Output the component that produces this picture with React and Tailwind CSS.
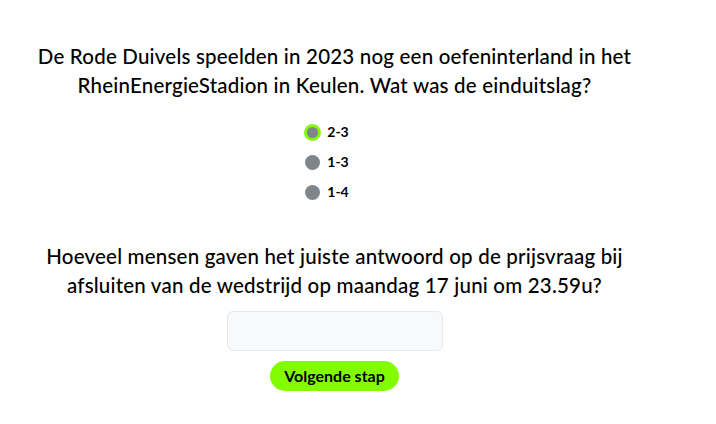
import React, { useState } from 'react';

const options = ['2-3', '1-3', '1-4'];

export default function App() {
  const [choice, setChoice] = useState('2-3');
  const [answer, setAnswer] = useState('');

  return (
    <div className="w-[716px] h-[424px] bg-white" style={{ fontFamily: 'Lato, "Open Sans", sans-serif' }}>
      <div className="w-[669px] flex flex-col items-center pt-[42px]">
        <h2 className="text-[20.5px] leading-[29px] tracking-[0.2px] font-medium text-black text-center">
          De Rode Duivels speelden in 2023 nog een oefeninterland in het
          <br />
          RheinEnergieStadion in Keulen. Wat was de einduitslag?
        </h2>

        <div className="mt-[24px] flex flex-col gap-[14px] pr-[16px]">
          {options.map((o) => (
            <label key={o} className="flex items-center gap-[7px] cursor-pointer" onClick={() => setChoice(o)}>
              <span className="w-4 h-4 flex items-center justify-center">
                <span
                  className={
                    choice === o
                      ? 'w-[17px] h-[17px] shrink-0 rounded-full bg-[#7e868c] border-[3px] border-[#84f80a]'
                      : 'w-[15px] h-[15px] rounded-full bg-[#7e868c]'
                  }
                />
              </span>
              <span className="text-[14px] leading-4 font-bold text-black">{o}</span>
            </label>
          ))}
        </div>

        <h2 className="mt-[42px] text-[20.5px] leading-[29px] tracking-[0.2px] font-medium text-black text-center">
          Hoeveel mensen gaven het juiste antwoord op de prijsvraag bij
          <br />
          afsluiten van de wedstrijd op maandag 17 juni om 23.59u?
        </h2>

        <input
          value={answer}
          onChange={(e) => setAnswer(e.target.value)}
          className="mt-[11px] w-[216px] h-[40px] rounded-md border border-[#e6e8eb] bg-[#f8f9fa] px-3 outline-none"
        />

        <button className="mt-[10px] h-[30px] px-[14px] rounded-full bg-[#84fc00] text-[16px] font-bold text-black">
          Volgende stap
        </button>
      </div>
    </div>
  );
}
